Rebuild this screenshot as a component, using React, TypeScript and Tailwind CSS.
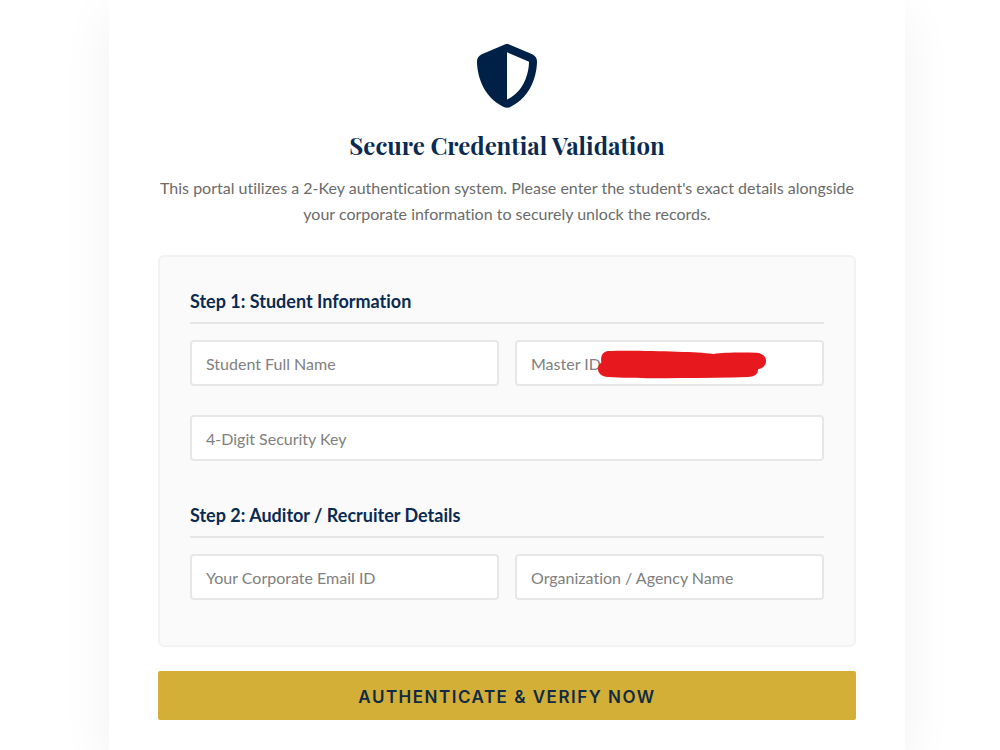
import { FaShieldHalved } from 'react-icons/fa6';
import type { ReactNode } from 'react';

type FieldProps = {
  id: string;
  label: string;
  type?: string;
  children?: ReactNode;
};

function Field({ id, label, type = 'text', children }: FieldProps) {
  return (
    <div className="relative min-w-0">
      <input
        id={id}
        name={id}
        type={type}
        aria-label={label}
        placeholder={label}
        className="block h-[46px] w-full rounded border-2 border-[#e7e7e7] bg-white px-3.5 text-base text-[#333333] outline-none placeholder:text-[#808080] focus:border-[#d4af37]"
      />
      {children}
    </div>
  );
}

function StepTitle({ children }: { children: ReactNode }) {
  return (
    <h3 className="mb-4 border-b-2 border-[#e5e5e5] pb-2 text-lg leading-[26px] font-bold text-[#0a2a52]">
      {children}
    </h3>
  );
}

function Redaction() {
  return (
    <svg
      aria-hidden="true"
      viewBox="0 0 510 90"
      className="pointer-events-none absolute top-2.5 left-[82px] h-[30px] w-[170px]"
    >
      <path
        fill="#e8181f"
        d="M34 3C80 1 180 3 240 5C290 6 320 8 350 12C380 7 430 7 478 8C496 9 508 20 507 33C507 46 498 55 483 58C484 72 472 81 453 81C390 83 320 84 250 84C170 85 90 85 34 81C14 80 3 70 3 57C3 47 7 42 13 38C10 20 15 5 34 3Z"
      />
    </svg>
  );
}

export default function App() {
  return (
    <div className="min-h-screen overflow-hidden bg-white pl-3.5 font-['Lato',sans-serif] [font-variant-ligatures:none]">
      <main className="mx-auto min-h-screen w-full max-w-[796px] bg-white px-[49px] pt-11 pb-[30px] shadow-[0_15px_50px_rgba(0,0,0,0.06)]">
        <header className="text-center">
          <FaShieldHalved className="mx-auto size-16 text-[#002147]" aria-hidden="true" />
          <h2 className="mt-[18px] font-['Playfair_Display','Liberation_Serif',serif] text-2xl leading-[38px] font-bold text-[#0a2a52]">
            Secure Credential Validation
          </h2>
          <p className="mt-[11px] text-base leading-[26px] text-[#6b6b6b]">
            This portal utilizes a 2-Key authentication system. Please enter the student's exact
            details alongside your corporate information to securely unlock the records.
          </p>
        </header>

        <form className="mt-7" onSubmit={(event) => event.preventDefault()}>
          <div className="rounded-md border-2 border-[#f2f2f2] bg-[#fafafa] px-[30px] pt-[31px] pb-[45px]">
            <section>
              <StepTitle>Step 1: Student Information</StepTitle>
              <div className="grid grid-cols-2 gap-x-4 gap-y-[29px]">
                <Field id="student-name" label="Student Full Name" />
                <Field id="master-id" label="Master ID">
                  <Redaction />
                </Field>
                <div className="col-span-2">
                  <Field id="security-key" label="4-Digit Security Key" />
                </div>
              </div>
            </section>
            <section className="mt-[41px]">
              <StepTitle>Step 2: Auditor / Recruiter Details</StepTitle>
              <div className="grid grid-cols-2 gap-4">
                <Field id="corporate-email" label="Your Corporate Email ID" type="email" />
                <Field id="organization" label="Organization / Agency Name" />
              </div>
            </section>
          </div>
          <button
            type="submit"
            className="mt-6 h-[49px] w-full rounded-xs bg-[#d4af37] pt-1 font-['Inter',sans-serif] text-[17px] font-semibold tracking-[1.5px] text-[#0f2b45] uppercase"
          >
            Authenticate &amp; Verify Now
          </button>
        </form>
      </main>
    </div>
  );
}
